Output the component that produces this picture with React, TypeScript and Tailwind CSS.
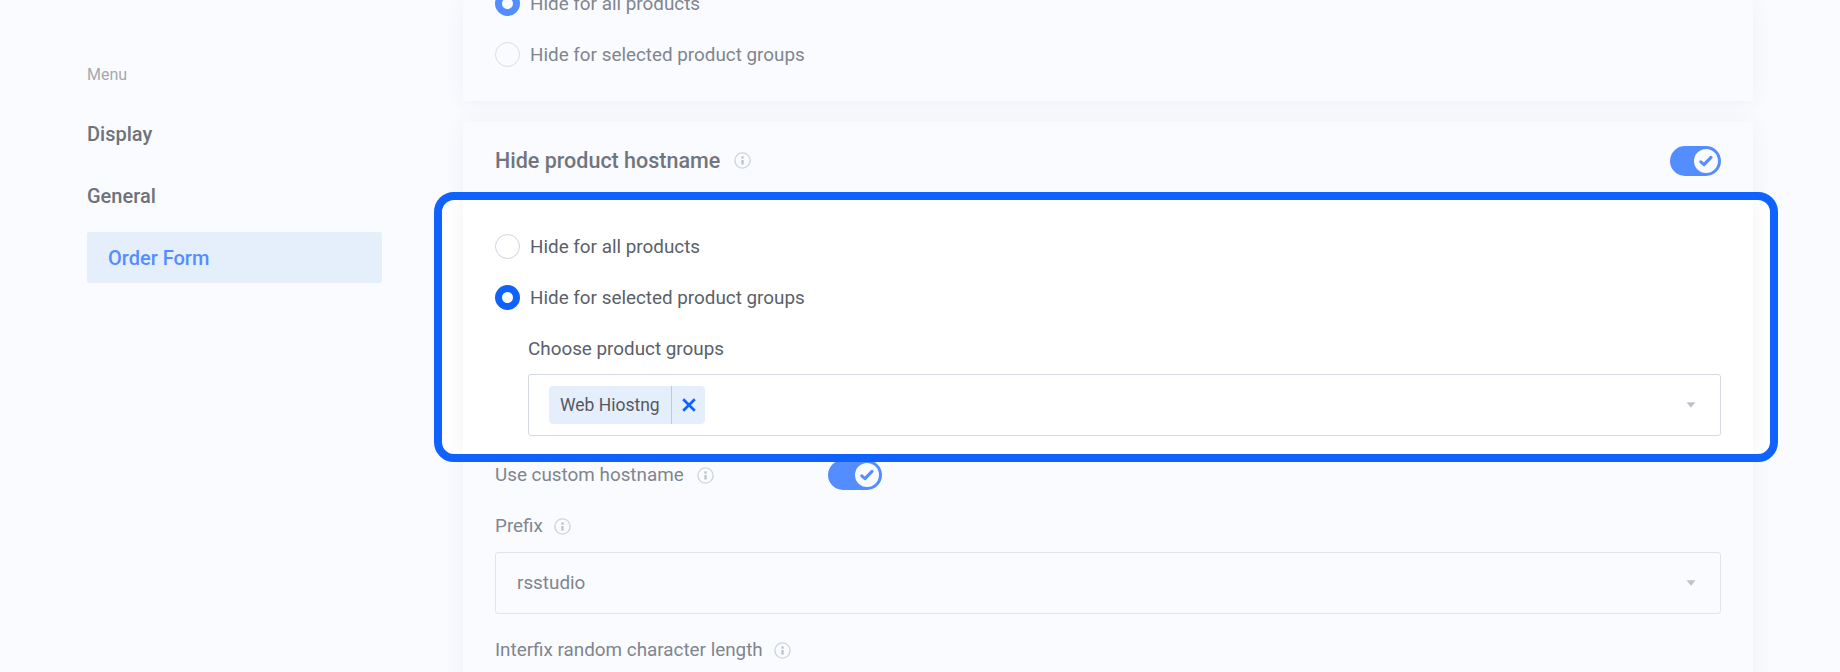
import React from "react";

function InfoIcon({ className = "" }: { className?: string }) {
  return (
    <svg viewBox="0 0 17 17" className={`h-[17px] w-[17px] shrink-0 ${className}`} fill="none">
      <circle cx="8.5" cy="8.5" r="7.6" stroke="#ced4de" strokeWidth="1.4" />
      <rect x="7.4" y="4.3" width="2.2" height="2.4" fill="#b9c0cb" />
      <rect x="7.4" y="8" width="2.2" height="4.6" fill="#b9c0cb" />
    </svg>
  );
}

function Toggle({ className = "" }: { className?: string }) {
  return (
    <div className={`flex h-[30px] shrink-0 items-center justify-end rounded-full bg-[#548dff] pr-[3px] ${className}`}>
      <div className="flex h-6 w-6 items-center justify-center rounded-full bg-[#fafbff]">
        <svg viewBox="0 0 14 12" className="h-3 w-3.5" fill="none">
          <path d="M1.8 6.8 L5 9.6 L12 2.4" stroke="#548dff" strokeWidth="3" strokeLinecap="round" strokeLinejoin="round" />
        </svg>
      </div>
    </div>
  );
}

function Radio({ label, checked = false, faded = false }: { label: string; checked?: boolean; faded?: boolean }) {
  const ring = checked
    ? faded
      ? "border-[7px] border-[#548dff]"
      : "border-[7px] border-[#0f62fe]"
    : faded
      ? "border-[1.5px] border-[#d6dee9]"
      : "border-[1.5px] border-[#ccd3df]";
  return (
    <div className="flex h-[51px] items-center">
      <span className={`h-[25px] w-[25px] shrink-0 rounded-full ${ring}`} />
      <span className={`ml-[10px] pt-px text-[18.85px] ${faded ? "text-[#80858e]" : "text-[#5a606a]"}`}>{label}</span>
    </div>
  );
}

function Caret() {
  return (
    <svg viewBox="0 0 10 6" className="mr-6 h-1.5 w-2.5">
      <path d="M0.5 0.3h9L5 5.7z" fill="#bcc3cc" />
    </svg>
  );
}

export default function App() {
  return (
    <div className="flex h-[672px] w-[1840px] overflow-hidden bg-[#fafbff] font-['Roboto','Liberation_Sans',sans-serif] leading-none whitespace-nowrap">
      <nav className="ml-[87px] w-[295px] shrink-0 pt-[59px] text-[20px] font-medium text-[#6d727b]">
        <div className="flex h-8 items-center text-[16px] font-normal text-[#a5a9b0]">Menu</div>
        <div className="mt-[17px] flex h-[51px] items-center">Display</div>
        <div className="mt-[11px] flex h-[51px] items-center">General</div>
        <div className="mt-[11px] flex h-[51px] items-center rounded-[2px] bg-[#e5effc] pl-[21px] text-[#548dff]">Order Form</div>
      </nav>

      <main className="ml-[81px] flex w-[1290px] shrink-0 flex-col">
        <section className="flex h-[101px] shrink-0 flex-col bg-[#fafbff] px-8 shadow-[0_2px_20px_rgba(60,75,90,0.06)]">
          <div className="-mt-[22px]">
            <Radio label="Hide for all products" checked faded />
            <Radio label="Hide for selected product groups" faded />
          </div>
        </section>

        <section className="mt-[21px] h-[580px] shrink-0 bg-[#fafbff] shadow-[0_2px_20px_rgba(60,75,90,0.06)]">
          <header className="flex h-[70px] items-center px-8 pt-[7px]">
            <h2 className="text-[21.5px] font-medium text-[#70757e]">Hide product hostname</h2>
            <InfoIcon className="ml-[14px]" />
            <Toggle className="ml-auto w-[51px]" />
          </header>

          <div className="relative z-10 -mr-[25px] -ml-[29px] h-[270px] overflow-hidden rounded-[20px] border-8 border-[#0f62fe] bg-white pr-[17px] pl-[21px]">
            <div className="h-full bg-white px-8 pt-[21px] shadow-[0_0_20px_rgba(60,75,90,0.08)]">
              <Radio label="Hide for all products" />
              <Radio label="Hide for selected product groups" checked />
              <div className="ml-[33px]">
                <div className="flex h-[51px] items-center pt-px text-[18.85px] text-[#5a606a]">Choose product groups</div>
                <div className="flex h-[62px] items-center justify-between rounded-[3px] border border-[#d5dae2] pl-5">
                  <div className="flex h-[38px] rounded-[4px] bg-[#e5effc]">
                    <span className="flex w-[123px] items-center border-r border-[#c0cad8] pt-[2px] pl-[11px] text-[17.5px] text-[#55595f]">Web Hiostng</span>
                    <span className="flex w-[33px] items-center justify-center">
                      <svg viewBox="0 0 14 14" className="h-3.5 w-3.5">
                        <path d="M1.2 1.2l11.6 11.6M12.8 1.2L1.2 12.8" stroke="#0f62fe" strokeWidth="2.7" />
                      </svg>
                    </span>
                  </div>
                  <Caret />
                </div>
              </div>
            </div>
          </div>

          <div className="-mt-[2px] px-8 text-[18.85px] text-[#80858e]">
            <div className="flex h-[30px] items-center">
              <span className="w-[189px] shrink-0">Use custom hostname</span>
              <InfoIcon className="ml-[13px]" />
              <Toggle className="ml-[114px] w-[54px]" />
            </div>
            <div className="mt-[21px] flex h-[30px] items-center">
              <span>Prefix</span>
              <InfoIcon className="ml-[11px]" />
            </div>
            <div className="mt-[11px] flex h-[62px] items-center justify-between rounded-[3px] border border-[#e0e4eb] pl-[21px]">
              <span>rsstudio</span>
              <Caret />
            </div>
            <div className="mt-[20px] flex h-[32px] items-center">
              <span>Interfix random character length</span>
              <InfoIcon className="ml-[11px]" />
            </div>
          </div>
        </section>
      </main>
    </div>
  );
}
